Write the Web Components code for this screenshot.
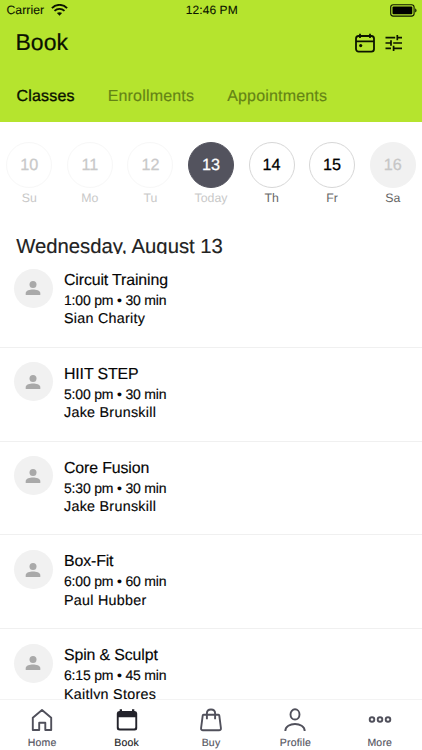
<!DOCTYPE html>
<html lang="en">
<head>
<meta charset="utf-8">
<title>Book</title>
<style>
html,body{margin:0;height:100%;background:#fff}
body{font-family:"Liberation Sans",Arial,sans-serif;color:#111;overflow:hidden;text-rendering:geometricPrecision}
</style>
</head>
<body>
<booking-app></booking-app>
<script>
const define = (name, render) => customElements.define(name, class extends HTMLElement {
  connectedCallback() {
    if (this.shadowRoot) return;
    this.attachShadow({mode: "open"}).innerHTML = render(this);
  }
});

define("status-bar", () => `
<style>
:host{display:grid;grid-template-columns:1fr auto 1fr;align-items:center;height:20px;padding:0 5px 0 6.5px;font-size:12.2px;line-height:20px;color:#0c1400;box-sizing:border-box;-webkit-text-stroke:.1px}
div{display:flex;align-items:center;gap:7px}
.left{letter-spacing:.05px}
.mid{font-size:12px;letter-spacing:.1px;margin-top:-1px}
.right{justify-content:flex-end}
svg{display:block}
</style>
<div class="left"><span>Carrier</span><svg width="17" height="12" viewBox="0 0 17 12" fill="none" stroke="#0c1400" stroke-width="1.9"><path d="M.9 4.1C5.2-.2 11.8-.2 16.1 4.1"/><path d="M3.5 6.9c2.9-2.7 7.1-2.7 10 0"/><path d="M8.5 11.7 5.9 9.1c1.5-1.3 3.7-1.3 5.2 0z" fill="#0c1400" stroke="none"/></svg></div>
<div class="mid">12:46 PM</div>
<div class="right"><svg width="27" height="13" viewBox="0 0 27 13"><rect x=".7" y=".7" width="23.4" height="11.4" rx="2.6" fill="none" stroke="#0c1400" stroke-width="1.1"/><rect x="2.5" y="2.5" width="19.8" height="7.8" rx="1" fill="#000"/><path d="M25.2 4.2c1.8.8 1.8 3.6 0 4.4z" fill="#0c1400"/></svg></div>`);

define("page-header", () => `
<style>
:host{display:block;height:122px;background:#b5e42e;overflow:hidden}
.title{display:flex;align-items:center;justify-content:space-between;height:45px;padding:0 19.5px 0 15.5px}
h1{margin:0;font-size:23px;font-weight:400;line-height:45px;color:#0a1100;-webkit-text-stroke:.2px}
.actions{display:flex;align-items:center;gap:10px}
svg{display:block}
nav{display:flex;gap:33px;padding:0 16.5px;margin-top:19.5px}
</style>
<status-bar></status-bar>
<div class="title"><h1>Book</h1><div class="actions">
<svg width="20" height="20" viewBox="0 0 20 20" fill="none" stroke="#0c1400" stroke-width="1.8"><rect x="1" y="3" width="18" height="15.7" rx="2.6"/><path d="M1 8.4h18M5 .7v4.2M15 .7v4.2"/><circle cx="5.7" cy="12.6" r="1.6" fill="#0c1400" stroke="none"/></svg>
<svg width="18" height="18" viewBox="0 0 18 18" fill="none" stroke="#0c1400" stroke-width="1.7"><path d="M.5 3.6h9.7M12.3 .9v5.4M12.3 3.6H17M.5 9h5.3M6 6.3v5.4M8.2 9H17M.5 14.4H6M8.6 11.7v5.4M8.6 14.4H17"/></svg>
</div></div>
<nav><tab-item active>Classes</tab-item><tab-item>Enrollments</tab-item><tab-item>Appointments</tab-item></nav>`);

define("tab-item", () => `
<style>
:host{display:block;font-size:16px;line-height:24px;letter-spacing:.18px;color:#648315;-webkit-text-stroke:.15px}
:host([active]){color:#0a1100;-webkit-text-stroke:.35px}
</style><slot></slot>`);

define("day-item", el => `
<style>
:host{display:flex;flex-direction:column;align-items:center;color:#666}
.c{width:46px;height:46px;box-sizing:border-box;border:1px solid #d7d7d7;border-radius:50%;display:grid;place-items:center;padding-top:1.5px;font-size:16.2px;color:#000;line-height:1;-webkit-text-stroke:.25px}
.l{margin-top:2.5px;font-size:12.3px;line-height:16px}
:host([state=past]){color:#c8c8c8}
:host([state=past]) .c{color:#c9c9c9;border-color:#f7f7f7}
:host([state=today]){color:#c8c8c8}
:host([state=today]) .c{background:#53535e;border-color:#53535e;color:#fff}
:host([state=off]) .c{background:#f1f1f1;border-color:#f1f1f1;color:#c6c6c6}
</style><div class="c"><slot></slot></div><div class="l">${el.getAttribute("label")}</div>`);

define("week-strip", () => `
<style>:host{display:grid;grid-template-columns:repeat(7,1fr);margin:0 -1px;padding-top:19.5px}</style><slot></slot>`);

define("date-heading", () => `
<style>:host{display:block;box-sizing:border-box;height:19.5px;margin-top:28px;padding-left:16.2px;overflow:hidden;font-size:20.3px;line-height:24px;color:#222;-webkit-text-stroke:.15px}
span{display:block;padding-top:1px}</style><span><slot></slot></span>`);

define("class-row", el => `
<style>
:host{display:flex;box-sizing:border-box;height:93.8px;border-bottom:1px solid #f0f0f0;padding:14.7px 13.7px 0;gap:11.3px;color:#050505;-webkit-text-stroke:.15px}
:host(:first-of-type){padding-top:15px;height:94.3px}
.av{width:39px;height:39px;border-radius:50%;background:#f1f1f1;display:grid;place-items:center;flex:none}
.t{font-size:15.9px;line-height:20px;margin-top:2.4px;letter-spacing:-.13px}
.s{font-size:14px;line-height:19px;letter-spacing:-.18px}
.s.i{font-size:14.3px;letter-spacing:.28px;padding-top:.4px}
</style>
<div class="av"><svg width="16" height="16" viewBox="0 0 16 16" fill="#a9a9a9"><circle cx="8" cy="4.4" r="3.5"/><path d="M.7 15v-2C.7 10.6 5 9.5 8 9.5s7.3 1.1 7.3 3.5v2z"/></svg></div>
<div><div class="t"><slot></slot></div><div class="s">${el.getAttribute("time")}</div><div class="s i">${el.getAttribute("staff")}</div></div>`);

const icons = {
  home: '<path d="M2.8 9.8 12 2l9.2 7.8V22H15.3v-7.2H9.2V22H2.8z" stroke-linejoin="round"/>',
  book: '<g stroke="none" fill="#23232b"><path d="M1.8 5.5Q1.8 3 4.2 3H4.7V1.2h2.3V3h10V1.2h2.3V3h.5q2.4 0 2.4 2.5V20q0 2.5-2.5 2.5h-15Q1.8 22.5 1.8 20z"/><path d="M3.7 9.3h16.6v9.8q0 1.5-1.5 1.5H5.2q-1.5 0-1.5-1.5z" fill="#fff"/></g>',
  buy: '<path d="M4.5 6.8h15q.7 0 .8.8l1.6 12.4q.3 2.3-1.9 2.3H4q-2.2 0-1.9-2.3L3.7 7.6q.1-.8.8-.8z"/><path d="M7.9 11.3V5.3c0-5.1 8.2-5.1 8.2 0v6"/>',
  profile: '<ellipse cx="12" cy="6.4" rx="4.5" ry="5.1"/><path d="M2.3 23c0-9.3 19.4-9.3 19.4 0"/>',
  more: '<circle cx="4" cy="11.5" r="2.3"/><circle cx="12" cy="11.5" r="2.3"/><circle cx="20" cy="11.5" r="2.3"/>'
};
define("nav-item", el => `
<style>
:host{display:flex;flex-direction:column;align-items:center;color:#55555f;font-size:10.5px;line-height:14px;letter-spacing:.2px;padding-top:8px;-webkit-text-stroke:.15px}
:host([active]){color:#1c1c24}
svg{display:block;margin-bottom:3.5px}
</style><svg width="24" height="24" viewBox="0 0 24 24" fill="none" stroke="#50505b" stroke-width="1.9">${icons[el.getAttribute("icon")]}</svg><slot></slot>`);

define("bottom-nav", () => `
<style>:host{display:grid;grid-template-columns:repeat(5,1fr);height:51px;box-sizing:border-box;border-top:1px solid #f3f3f3;background:#fff;flex:none}</style><slot></slot>`);

define("booking-app", () => `
<style>
:host{display:flex;flex-direction:column;width:422px;height:750px;overflow:hidden;background:#fff}
page-header{flex:none}
main{flex:1;min-height:0;overflow:hidden}
</style>
<page-header></page-header>
<main>
<week-strip>
<day-item state="past" label="Su">10</day-item><day-item state="past" label="Mo">11</day-item><day-item state="past" label="Tu">12</day-item><day-item state="today" label="Today">13</day-item><day-item label="Th">14</day-item><day-item label="Fr">15</day-item><day-item state="off" label="Sa">16</day-item>
</week-strip>
<date-heading>Wednesday, August 13</date-heading>
<class-row time="1:00 pm • 30 min" staff="Sian Charity">Circuit Training</class-row>
<class-row time="5:00 pm • 30 min" staff="Jake Brunskill">HIIT STEP</class-row>
<class-row time="5:30 pm • 30 min" staff="Jake Brunskill">Core Fusion</class-row>
<class-row time="6:00 pm • 60 min" staff="Paul Hubber">Box-Fit</class-row>
<class-row time="6:15 pm • 45 min" staff="Kaitlyn Stores">Spin &amp; Sculpt</class-row>
</main>
<bottom-nav>
<nav-item icon="home">Home</nav-item><nav-item icon="book" active>Book</nav-item><nav-item icon="buy">Buy</nav-item><nav-item icon="profile">Profile</nav-item><nav-item icon="more">More</nav-item>
</bottom-nav>`);
</script>
</body>
</html>
